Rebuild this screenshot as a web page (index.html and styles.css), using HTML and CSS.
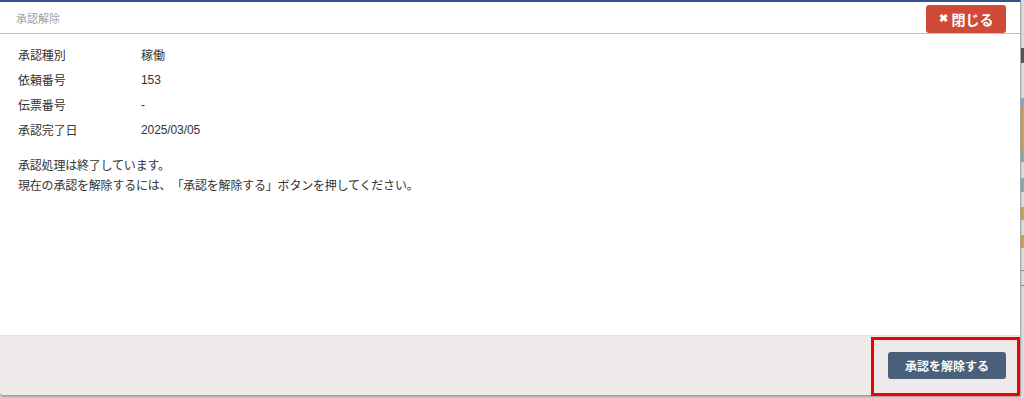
FILE: index.html
```html
<!DOCTYPE html>
<html lang="ja">
<head>
<meta charset="utf-8">
<link rel="stylesheet" href="styles.css">
</head>
<body>
<div class="page">
  <div class="modal">
    <div class="modal-header">
      <span class="modal-title">承認解除</span>
      <button class="btn-close"><span class="x">✖</span>閉じる</button>
    </div>
    <div class="modal-body">
      <dl class="info">
        <dt>承認種別</dt><dd>稼働</dd>
        <dt>依頼番号</dt><dd>153</dd>
        <dt>伝票番号</dt><dd>-</dd>
        <dt>承認完了日</dt><dd>2025/03/05</dd>
      </dl>
      <p class="msg">承認処理は終了しています。<br>現在の承認を解除するには、「承認を解除する」ボタンを押してください。</p>
    </div>
    <div class="modal-footer">
      <button class="btn-release">承認を解除する</button>
      <div class="highlight"></div>
    </div>
  </div>
  <div class="backdrop-edge"></div>
</div>
</body>
</html>
```
FILE: styles.css
```css
* { box-sizing: border-box; }
html, body { margin: 0; padding: 0; }
body {
  width: 1024px;
  height: 398px;
  overflow: hidden;
  background: #b8b8b8;
  font-family: "Liberation Sans", "Noto Sans CJK JP", sans-serif;
  color: #333;
  text-spacing-trim: space-all;
}
.page {
  display: flex;
  height: 398px;
  background: #d6d6d6;
}
.modal {
  width: 1021px;
  height: 395px;
  background: #fff;
  border-top: 2px solid #34538f;
  border-right: 1px solid #a9a9a9;
  border-radius: 0 0 4px 4px;
  box-shadow: 0 2px 2px rgba(0,0,0,0.25);
  display: flex;
  flex-direction: column;
  position: relative;
  flex: none;
}
.modal-header {
  height: 32px;
  border-bottom: 1px solid #bdbdbd;
  display: flex;
  align-items: center;
  justify-content: space-between;
  padding: 0 14px 0 16px;
}
.modal-title {
  font-size: 11px;
  color: #a0a0a0;
  padding-top: 1px;
}
.btn-close {
  margin-top: 2px;
  width: 80px;
  height: 28px;
  border: none;
  border-radius: 3px;
  background: #d04b37;
  color: #fff;
  font-family: inherit;
  font-size: 14px;
  font-weight: bold;
  display: flex;
  align-items: center;
  justify-content: center;
  gap: 4px;
  padding: 0;
}
.btn-close .x { font-size: 11px; }
.modal-body {
  flex: 1;
  padding: 8px 18px 0;
}
.info {
  display: grid;
  grid-template-columns: 123px 1fr;
  grid-auto-rows: 25px;
  align-items: center;
  margin: 0;
  font-size: 12px;
  color: #333;
  letter-spacing: -0.1px;
}
.info dt, .info dd { margin: 0; }
.msg {
  margin: 14px 0 0;
  font-size: 12px;
  line-height: 20px;
  color: #333;
  letter-spacing: -0.2px;
}
.modal-footer {
  height: 60px;
  background: #eeeae9;
  border-top: 1px solid #e2dedc;
  border-radius: 0 0 4px 4px;
  display: flex;
  align-items: center;
  justify-content: flex-end;
  padding: 0 14px 0 0;
  position: relative;
}
.btn-release {
  width: 118px;
  height: 27px;
  border: none;
  border-radius: 3px;
  background: #4a5f7a;
  color: #fff;
  font-family: inherit;
  font-size: 12px;
  font-weight: bold;
  padding: 0;
}
.highlight {
  position: absolute;
  left: 871px;
  top: 1px;
  width: 149px;
  height: 59px;
  border: 3px solid #f00000;
}
.backdrop-edge {
  flex: 1;
  background: linear-gradient(to bottom,
    #dcdcdc 0 48px, #4f5963 48px 63px, #dcdcdc 63px 98px,
    #8fa8b6 98px 107px, #d4a24c 107px 150px, #8fa8b6 150px 162px,
    #dcdcdc 162px 178px, #8fa8b6 178px 192px, #dcdcdc 192px 207px,
    #d4a24c 207px 220px, #dcdcdc 220px 235px, #d4a24c 235px 248px,
    #dcdcdc 248px 270px, #8a8a8a 270px 271px, #dcdcdc 271px 285px,
    #8a8a8a 285px 286px, #dcdcdc 286px 398px);
}
```
